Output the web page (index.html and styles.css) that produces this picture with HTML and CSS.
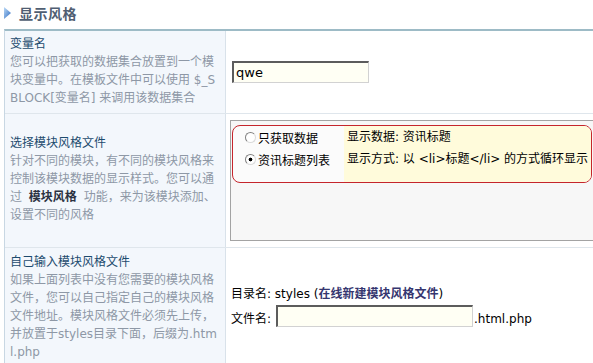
FILE: index.html
```html
<!DOCTYPE html>
<html lang="zh-CN">
<head>
<meta charset="utf-8">
<title>显示风格</title>
<link rel="stylesheet" href="styles.css">
</head>
<body>
<div class="page">
  <div class="head">
    <svg class="tri" width="7" height="12" viewBox="0 0 7 12" aria-hidden="true">
      <defs>
        <linearGradient id="tg" x1="0" y1="0" x2="1" y2="1">
          <stop offset="0" stop-color="#bcdaf7"/>
          <stop offset="1" stop-color="#2e6cc2"/>
        </linearGradient>
      </defs>
      <path d="M0 0 L7 6 L0 12 Z" fill="url(#tg)"/>
    </svg>
    <h2 class="title">显示风格</h2>
  </div>

  <div class="form">
    <div class="row">
      <div class="lbl">
        <div class="name">变量名</div>
        <div class="desc">您可以把获取的数据集合放置到一个模块变量中。在模板文件中可以使用 $_SBLOCK[变量名] 来调用该数据集合</div>
      </div>
      <div class="val">
        <input class="txt w1" type="text" value="qwe">
      </div>
    </div>

    <div class="row">
      <div class="lbl mid">
        <div class="name">选择模块风格文件</div>
        <div class="desc">针对不同的模块，有不同的模块风格来控制该模块数据的显示样式。您可以通过 <b class="em">模块风格</b> 功能，来为该模块添加、设置不同的风格</div>
      </div>
      <div class="val box-cell">
        <div class="stylebox">
          <div class="choice">
            <div class="opts">
              <label class="opt"><input class="radio" type="radio" name="tpl">只获取数据</label>
              <label class="opt"><input class="radio" type="radio" name="tpl" checked>资讯标题列表</label>
            </div>
            <div class="info">
              <div class="info-line">显示数据: 资讯标题</div>
              <div class="info-line">显示方式: 以 &lt;li&gt;标题&lt;/li&gt; 的方式循环显示</div>
            </div>
          </div>
        </div>
      </div>
    </div>

    <div class="row">
      <div class="lbl">
        <div class="name">自己输入模块风格文件</div>
        <div class="desc">如果上面列表中没有您需要的模块风格文件，您可以自己指定自己的模块风格文件地址。模块风格文件必须先上传，并放置于styles目录下面，后缀为.html.php</div>
      </div>
      <div class="val file-cell">
        <div class="dir-line">目录名: styles (<b class="link">在线新建模块风格文件</b>)</div>
        <div class="file-line"><span class="fl">文件名:</span><input class="txt w2" type="text"><span class="fl">.html.php</span></div>
      </div>
    </div>
  </div>
</div>
</body>
</html>
```

FILE: styles.css
```css
html, body {
  margin: 0;
  padding: 0;
  overflow: hidden;
  background: #ffffff;
}

body {
  font-family: "DejaVu Sans", "Noto Sans CJK SC", sans-serif;
  font-size: 12px;
  color: #000;
}

.page {
  width: 593px;
  height: 363px;
  overflow: hidden;
}

.head {
  height: 29px;
  box-sizing: border-box;
  display: flex;
  align-items: center;
  padding: 0 0 3px 4px;
}

.tri {
  display: block;
  flex: none;
}

.title {
  margin: 0 0 0 8px;
  font-family: "Noto Sans CJK SC", sans-serif;
  font-size: 14px;
  font-weight: bold;
  line-height: 18px;
  letter-spacing: 0.5px;
  color: #505e72;
}

.form {
  margin-left: 4px;
  width: 660px;
  border-top: 2px solid #9dbbc6;
  border-left: 1px solid #c8d7e3;
}

.row {
  display: grid;
  grid-template-columns: 221px 1fr;
  border-bottom: 1px solid #dfe6ec;
}

.lbl {
  box-sizing: border-box;
  background: #f3f7fc;
  border-right: 1px solid #d9e2ea;
  padding: 4px 6px 6px 5px;
  line-height: 18px;
  font-family: "DejaVu Sans", "Noto Sans CJK SC", sans-serif;
}

.lbl.mid {
  display: flex;
  flex-direction: column;
  justify-content: center;
  padding-bottom: 8px;
}

.row:last-child .lbl {
  padding-top: 5px;
}

.name {
  color: #1d4b6e;
}

.desc {
  color: #8e98a6;
  word-break: break-all;
}

.em {
  color: #2b3242;
  margin: 0 3px;
}

.val {
  display: flex;
  flex-direction: column;
  justify-content: center;
  padding-left: 6px;
  background: #ffffff;
}

.txt {
  box-sizing: border-box;
  height: 22px;
  margin: 0;
  padding: 0 2px;
  border-style: solid;
  border-width: 2px 1px 1px 2px;
  border-color: #5c5c5c #d2d2d2 #d2d2d2 #5c5c5c;
  background: #fffff4;
  font-family: "DejaVu Sans", sans-serif;
  font-size: 13px;
  color: #000;
  outline: none;
}

.w1 { width: 137px; }
.w2 { width: 197px; margin: 0 1px 0 5px; }

.box-cell {
  justify-content: flex-start;
  padding: 6px 0 6px 4px;
}

.stylebox {
  box-sizing: border-box;
  width: 420px;
  height: 121px;
  border: 1px solid #a3a3a3;
  background: #f7f7f7;
  padding: 4px 0 0 1px;
}

.choice {
  box-sizing: border-box;
  width: 360px;
  height: 58px;
  border: 1px solid #c5252c;
  border-radius: 8px;
  overflow: hidden;
  display: flex;
  background: #fbfbfb;
}

.opts {
  width: 111px;
  flex: none;
}

.opt {
  display: flex;
  align-items: center;
  height: 22px;
  font-family: "Noto Sans CJK SC", sans-serif;
}

.radio {
  appearance: none;
  -webkit-appearance: none;
  box-sizing: border-box;
  width: 11px;
  height: 11px;
  margin: 0 2px 0 12px;
  border-radius: 50%;
  border: 1px solid;
  border-color: #808080 #dadada #dadada #808080;
  background: #ffffff;
  flex: none;
}

.radio:checked {
  background: radial-gradient(circle, #000 0 1.6px, #ffffff 2.2px);
}

.info {
  flex: 1;
  background: #fffbdb;
  padding-left: 3px;
}

.info-line {
  height: 22px;
  line-height: 22px;
  white-space: nowrap;
}

.file-cell {
  padding-left: 5px;
  padding-bottom: 4px;
}

.dir-line {
  line-height: 18px;
}

.link {
  color: #35366f;
}

.file-line {
  display: flex;
  align-items: flex-end;
  margin-top: 2px;
}

.fl {
  line-height: 16px;
}
```
